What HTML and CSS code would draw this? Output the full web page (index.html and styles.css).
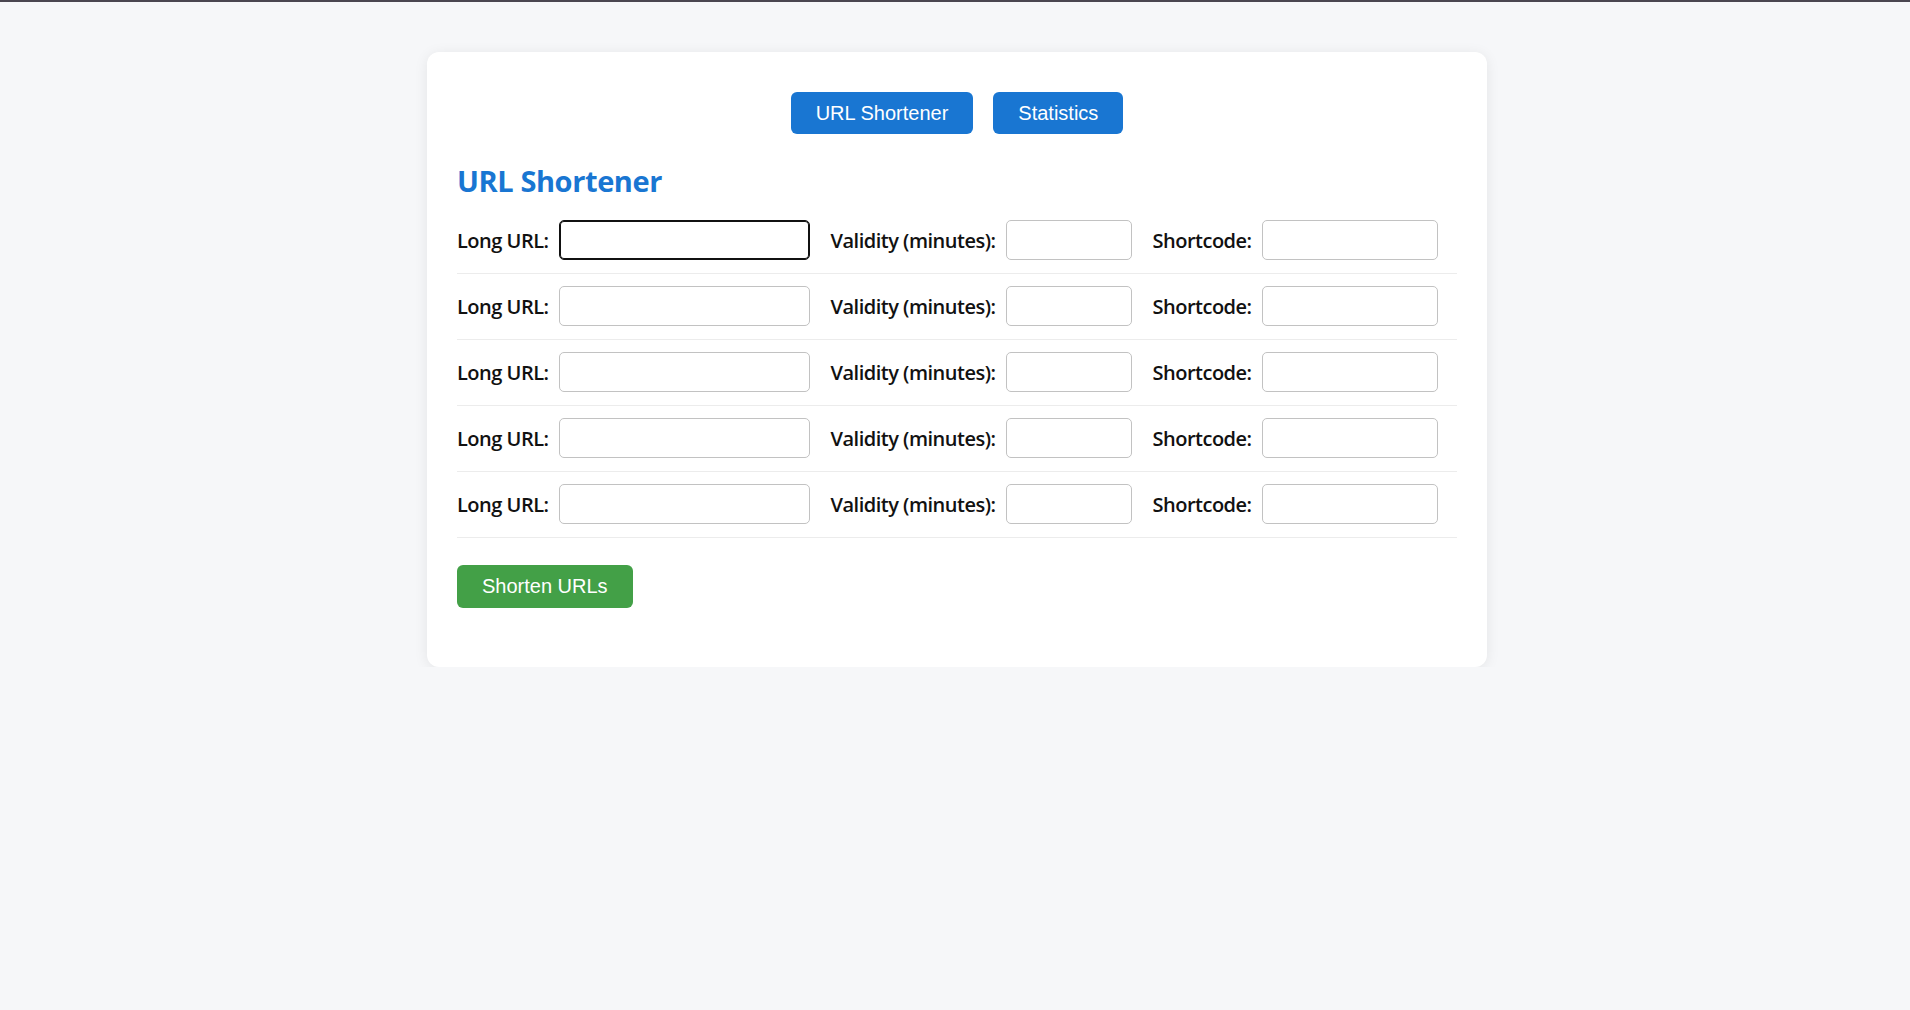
FILE: index.html
```html
<!DOCTYPE html>
<html lang="en">
<head>
<meta charset="utf-8">
<title>URL Shortener</title>
<link rel="stylesheet" href="styles.css">
</head>
<body>
<div class="topline"></div>
<div class="page">
  <div class="card">
    <nav class="nav">
      <button class="btn btn-blue">URL Shortener</button>
      <button class="btn btn-blue">Statistics</button>
    </nav>
    <h2 class="title">URL Shortener</h2>
    <form class="form">
      <div class="row">
        <label class="group"><span class="lbl">Long URL:</span><input class="inp inp-url focused" type="text"></label>
        <label class="group"><span class="lbl">Validity (minutes):</span><input class="inp inp-val" type="text"></label>
        <label class="group"><span class="lbl">Shortcode:</span><input class="inp inp-code" type="text"></label>
      </div>
      <div class="row">
        <label class="group"><span class="lbl">Long URL:</span><input class="inp inp-url" type="text"></label>
        <label class="group"><span class="lbl">Validity (minutes):</span><input class="inp inp-val" type="text"></label>
        <label class="group"><span class="lbl">Shortcode:</span><input class="inp inp-code" type="text"></label>
      </div>
      <div class="row">
        <label class="group"><span class="lbl">Long URL:</span><input class="inp inp-url" type="text"></label>
        <label class="group"><span class="lbl">Validity (minutes):</span><input class="inp inp-val" type="text"></label>
        <label class="group"><span class="lbl">Shortcode:</span><input class="inp inp-code" type="text"></label>
      </div>
      <div class="row">
        <label class="group"><span class="lbl">Long URL:</span><input class="inp inp-url" type="text"></label>
        <label class="group"><span class="lbl">Validity (minutes):</span><input class="inp inp-val" type="text"></label>
        <label class="group"><span class="lbl">Shortcode:</span><input class="inp inp-code" type="text"></label>
      </div>
      <div class="row">
        <label class="group"><span class="lbl">Long URL:</span><input class="inp inp-url" type="text"></label>
        <label class="group"><span class="lbl">Validity (minutes):</span><input class="inp inp-val" type="text"></label>
        <label class="group"><span class="lbl">Shortcode:</span><input class="inp inp-code" type="text"></label>
      </div>
      <button type="button" class="btn btn-green">Shorten URLs</button>
    </form>
  </div>
</div>
</body>
</html>
```
FILE: styles.css
```css
* { box-sizing: border-box; }
html, body {
  margin: 0;
  padding: 0;
  background: #f6f7f9;
  font-family: "Open Sans", "Noto Sans", sans-serif;
  color: #111;
}
.topline {
  height: 2px;
  background: #4a4650;
}
.page {
  padding: 50px 0 0 4px;
}
.card {
  width: 1060px;
  margin: 0 auto;
  background: #fff;
  border-radius: 12px;
  box-shadow: 0 2px 14px rgba(0, 0, 0, 0.08);
  padding: 40px 30px 59px;
}
.nav {
  display: flex;
  justify-content: center;
  gap: 20px;
}
.btn {
  font-family: "Liberation Sans", Arial, sans-serif;
  font-size: 20px;
  color: #fff;
  border: none;
  border-radius: 6px;
  height: 42px;
  padding: 0 25px;
  cursor: pointer;
}
.btn-blue { background: #1976d2; }
.btn-green { background: #43a047; margin-top: 15px; height: 43px; }
.title {
  margin: 29px 0 21px;
  font-size: 29px;
  line-height: 36px;
  letter-spacing: -0.4px;
  font-weight: 700;
  color: #1976d2;
}
.form { display: block; }
.row {
  display: flex;
  align-items: center;
  gap: 21px;
  padding-bottom: 13px;
  margin-bottom: 12px;
  border-bottom: 1px solid #ececec;
}
.group {
  display: flex;
  align-items: center;
  gap: 10px;
}
.lbl {
  font-size: 20px;
  font-weight: 600;
  letter-spacing: -0.5px;
  color: #111;
}
.inp {
  height: 40px;
  border: 1px solid #c2c2c2;
  border-radius: 5px;
  background: #fff;
  font-size: 20px;
  padding: 0 10px;
  outline: none;
}
.inp-url { width: 251px; }
.inp-val { width: 126px; }
.inp-code { width: 176px; }
.focused {
  border-color: #111;
  box-shadow: inset 0 0 0 1px #111;
}
```
